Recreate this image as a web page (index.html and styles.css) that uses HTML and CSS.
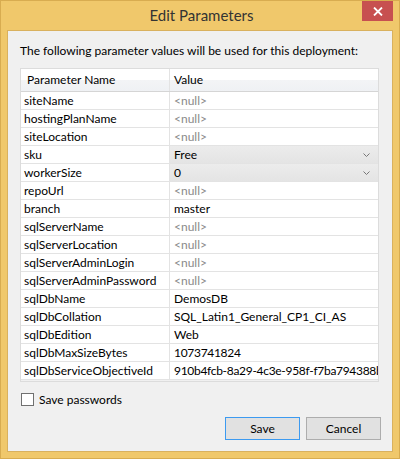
FILE: index.html
```html
<!DOCTYPE html>
<html>
<head>
<meta charset="utf-8">
<link rel="stylesheet" href="styles.css">
</head>
<body>
<div class="window">
  <div class="titlebar">
    <div></div>
    <div class="title">Edit Parameters</div>
    <div class="close"><svg width="10" height="9" viewBox="0 0 10 9"><path d="M1 0.5 L9 8.5 M9 0.5 L1 8.5" stroke="#fff" stroke-width="1.8"/></svg></div>
  </div>
  <div class="client">
    <div class="intro">The following parameter values will be used for this deployment:</div>
    <div class="grid">
      <div class="row head"><div class="c1">Parameter Name</div><div class="c2">Value</div></div>
      <div class="row"><div class="c1">siteName</div><div class="c2 null">&lt;null&gt;</div></div>
      <div class="row"><div class="c1">hostingPlanName</div><div class="c2 null">&lt;null&gt;</div></div>
      <div class="row"><div class="c1">siteLocation</div><div class="c2 null">&lt;null&gt;</div></div>
      <div class="row"><div class="c1">sku</div><div class="c2 combo"><span>Free</span><svg width="7" height="4" viewBox="0 0 7 4"><path d="M0.5 0.5 L3.5 3.5 L6.5 0.5" fill="none" stroke="#777" stroke-width="1"/></svg></div></div>
      <div class="row"><div class="c1">workerSize</div><div class="c2 combo"><span>0</span><svg width="7" height="4" viewBox="0 0 7 4"><path d="M0.5 0.5 L3.5 3.5 L6.5 0.5" fill="none" stroke="#777" stroke-width="1"/></svg></div></div>
      <div class="row"><div class="c1">repoUrl</div><div class="c2 null">&lt;null&gt;</div></div>
      <div class="row"><div class="c1">branch</div><div class="c2">master</div></div>
      <div class="row"><div class="c1">sqlServerName</div><div class="c2 null">&lt;null&gt;</div></div>
      <div class="row"><div class="c1">sqlServerLocation</div><div class="c2 null">&lt;null&gt;</div></div>
      <div class="row"><div class="c1">sqlServerAdminLogin</div><div class="c2 null">&lt;null&gt;</div></div>
      <div class="row"><div class="c1">sqlServerAdminPassword</div><div class="c2 null">&lt;null&gt;</div></div>
      <div class="row"><div class="c1">sqlDbName</div><div class="c2">DemosDB</div></div>
      <div class="row"><div class="c1">sqlDbCollation</div><div class="c2">SQL_Latin1_General_CP1_CI_AS</div></div>
      <div class="row"><div class="c1">sqlDbEdition</div><div class="c2">Web</div></div>
      <div class="row"><div class="c1">sqlDbMaxSizeBytes</div><div class="c2 num">1073741824</div></div>
      <div class="row"><div class="c1">sqlDbServiceObjectiveId</div><div class="c2 num">910b4fcb-8a29-4c3e-958f-f7ba794388b</div></div>
      <div class="filler"></div>
    </div>
    <label class="check"><span class="box"></span>Save passwords</label>
    <div class="buttons">
      <div class="btn default">Save</div>
      <div class="btn">Cancel</div>
    </div>
  </div>
</div>
</body>
</html>
```

FILE: styles.css
```css
html, body {
  margin: 0;
  padding: 0;
  background: #fff;
}
body {
  font-family: Lato, "Noto Sans", sans-serif;
  font-size: 12px;
  color: #000;
}
.window {
  width: 400px;
  height: 459px;
  box-sizing: border-box;
  border: 1px solid #d8ac50;
  background: #f0c86b;
  padding: 0 6px 6px 6px;
  display: flex;
  flex-direction: column;
}
.titlebar {
  height: 29px;
  display: grid;
  grid-template-columns: 1fr auto 1fr;
  align-items: start;
}
.title {
  font-size: 15px;
  color: #333;
  line-height: 29px;
  padding-left: 3px;
}
.close {
  justify-self: end;
  width: 31px;
  height: 20px;
  background: #c75050;
  display: flex;
  align-items: center;
  justify-content: center;
}
.client {
  flex: 1;
  background: #f0f0f0;
  border: 1px solid #d9b15e;
  padding: 0 13px 0 12px;
  display: flex;
  flex-direction: column;
}
.intro {
  margin-top: 12px;
  line-height: 16px;
  height: 16px;
}
.grid {
  margin-top: 9px;
  border: 1px solid #dcdcdc;
  background: #f0f0f0;
  display: flex;
  flex-direction: column;
  overflow: hidden;
}
.row {
  display: grid;
  grid-template-columns: 149px 1fr;
  height: 17px;
  border-bottom: 1px solid #e3e3e3;
  background: #fff;
  white-space: nowrap;
}
.row .c1 {
  border-right: 1px solid #e3e3e3;
  padding-left: 3px;
  line-height: 17px;
}
.row .c2 {
  padding-left: 4px;
  line-height: 17px;
  overflow: hidden;
  text-overflow: clip;
}
.row .num {
  letter-spacing: -0.3px;
}
.row.head {
  height: 22px;
  background: linear-gradient(#ffffff 0%, #ffffff 50%, #f3f4f6 50%, #eff1f4 100%);
  border-bottom: 1px solid #d5d5d5;
}
.row.head .c1, .row.head .c2 {
  line-height: 22px;
}
.row.head .c1 {
  padding-left: 6px;
}
.null {
  color: #8a8a8a;
}
.combo {
  display: flex;
  align-items: center;
  justify-content: space-between;
  background: linear-gradient(#ececec, #e4e4e4);
  padding-right: 8px;
}
.filler {
  height: 1px;
}
.check {
  margin-top: 9px;
  display: flex;
  align-items: center;
  height: 16px;
}
.box {
  width: 11px;
  height: 11px;
  border: 1px solid #707070;
  background: #fff;
  margin: 0 5px 0 1px;
}
.buttons {
  margin-top: 10px;
  display: flex;
  justify-content: flex-end;
  gap: 6px;
  margin-right: -2px;
}
.btn {
  width: 73px;
  height: 21px;
  border: 1px solid #adadad;
  background: #e1e1e1;
  text-align: center;
  line-height: 21px;
}
.btn.default {
  border-color: #3c9af0;
}
```
